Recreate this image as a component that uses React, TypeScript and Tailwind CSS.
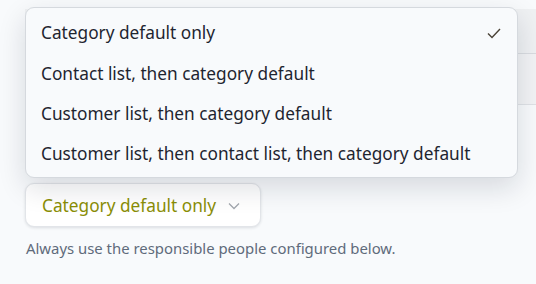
import React from "react";

const options = [
  "Category default only",
  "Contact list, then category default",
  "Customer list, then category default",
  "Customer list, then contact list, then category default",
];

export default function App() {
  return (
    <div
      className="relative w-[536px] h-[284px] overflow-hidden bg-[#f8fafc]"
      style={{ fontFamily: '"Noto Sans", "Open Sans", sans-serif' }}
    >
      {/* background card rows (partially covered by the menu) */}
      <div className="pt-[9px] pl-[25px]">
        <div className="h-[45px] bg-[#eff1f3] border-b border-[#d9dce0]" />
        <div className="h-[51px] bg-[#f2f3f5] border-b border-[#dfe2e6]" />
      </div>

      <div className="pl-[25px] pt-[78px]">
        <button className="flex items-center h-[44px] w-[236px] pl-[16px] pr-[20px] pt-[1px] rounded-[9px] bg-white border border-[#e2e5e9] shadow-[0_1px_3px_rgba(15,23,42,0.12)] text-[17.25px] text-[#8a8e06]">
          <span>Category default only</span>
          <svg
            className="ml-auto"
            width="12"
            height="8"
            viewBox="0 0 12 8"
            fill="none"
            stroke="#a3a8af"
            strokeWidth="1.3"
          >
            <path d="M1 1.5l5 5 5-5" />
          </svg>
        </button>
        <p className="mt-[10px] ml-[1px] text-[14.9px] text-[#5f6b7b]">
          Always use the responsible people configured below.
        </p>
      </div>

      {/* open dropdown menu */}
      <div className="absolute left-[25px] top-[7px] w-[493px] rounded-[9px] border border-[#d5d9de] bg-[#f8fafc] pt-[5px] pb-[3px] shadow-[0_10px_28px_rgba(15,23,42,0.14)]">
        {options.map((o, i) => (
          <div
            key={o}
            className="flex items-center h-[40.33px] pl-[15px] pr-[16px] text-[17.25px] text-[#1e2530]"
          >
            <span>{o}</span>
            {i === 0 && (
              <svg
                className="ml-auto"
                width="14"
                height="11"
                viewBox="0 0 14 11"
                fill="none"
                stroke="#4a4236"
                strokeWidth="1.4"
              >
                <path d="M1 5.5l4 4L13 1" />
              </svg>
            )}
          </div>
        ))}
      </div>
    </div>
  );
}
